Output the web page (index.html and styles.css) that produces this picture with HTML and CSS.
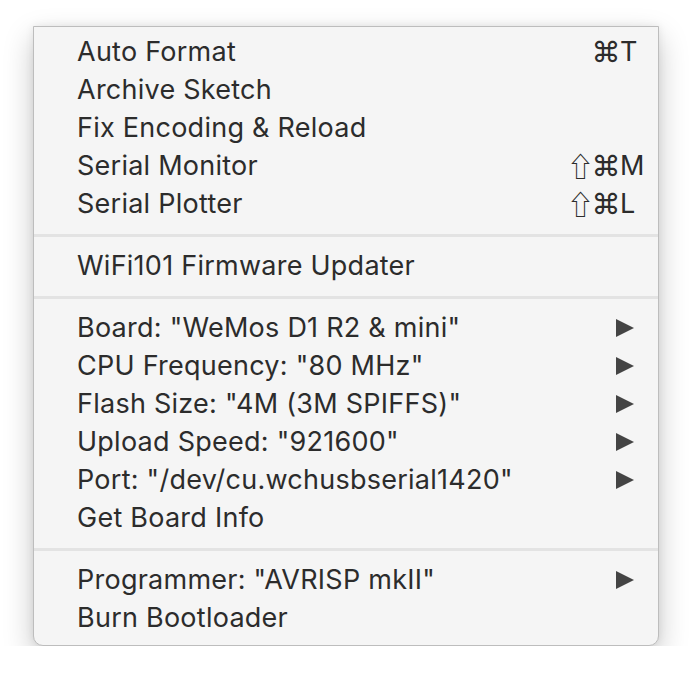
FILE: index.html
```html
<!DOCTYPE html>
<html>
<head>
<meta charset="utf-8">
<link rel="stylesheet" href="styles.css">
</head>
<body>
<div class="menu">
  <div class="item"><span class="label">Auto Format</span><span class="keys"><span class="mods"><span class="mod cmd">⌘</span></span><span class="key">T</span></span></div>
  <div class="item"><span class="label">Archive Sketch</span></div>
  <div class="item"><span class="label">Fix Encoding &amp; Reload</span></div>
  <div class="item"><span class="label">Serial Monitor</span><span class="keys"><span class="mods"><span class="mod shift">⇧</span><span class="mod cmd">⌘</span></span><span class="key">M</span></span></div>
  <div class="item"><span class="label">Serial Plotter</span><span class="keys"><span class="mods"><span class="mod shift">⇧</span><span class="mod cmd">⌘</span></span><span class="key">L</span></span></div>
  <div class="sep"></div>
  <div class="item"><span class="label">WiFi101 Firmware Updater</span></div>
  <div class="sep"></div>
  <div class="item"><span class="label">Board: "WeMos D1 R2 &amp; mini"</span><span class="arrow"></span></div>
  <div class="item"><span class="label">CPU Frequency: "80 MHz"</span><span class="arrow"></span></div>
  <div class="item"><span class="label">Flash Size: "4M (3M SPIFFS)"</span><span class="arrow"></span></div>
  <div class="item"><span class="label">Upload Speed: "921600"</span><span class="arrow"></span></div>
  <div class="item"><span class="label">Port: "/dev/cu.wchusbserial1420"</span><span class="arrow"></span></div>
  <div class="item"><span class="label">Get Board Info</span></div>
  <div class="sep"></div>
  <div class="item"><span class="label">Programmer: "AVRISP mkII"</span><span class="arrow"></span></div>
  <div class="item"><span class="label">Burn Bootloader</span></div>
</div>
</body>
</html>
```
FILE: styles.css
```css
html, body {
  margin: 0;
  padding: 0;
  background: #ffffff;
}
body {
  padding: 26px 0 0 33px;
  font-family: Inter, "Helvetica Neue", "Liberation Sans", sans-serif;
}
.menu {
  width: 624px;
  box-sizing: content-box;
  background: #f5f5f5;
  border: 1px solid #bdbdbd;
  border-radius: 0 0 10px 10px;
  padding: 6px 0 8px;
  box-shadow: 0 12px 30px rgba(0, 0, 0, 0.22), 0 0 8px rgba(0, 0, 0, 0.08);
  color: #2c2c2c;
}
.item {
  display: flex;
  align-items: center;
  height: 38px;
  padding-left: 43px;
  font-size: 27px;
  line-height: 38px;
  letter-spacing: 0.25px;
}
.label {
  flex: 1;
  white-space: nowrap;
}
.keys {
  display: flex;
  align-items: center;
  margin-right: 14px;
}
.mods {
  display: flex;
  justify-content: flex-end;
  gap: 1px;
  width: 50px;
  margin-right: 3px;
}
.mod {
  display: flex;
  justify-content: center;
  letter-spacing: 0;
}
.shift {
  width: 27px;
  font-family: "Noto Sans CJK JP", sans-serif;
  font-size: 27px;
}
.cmd {
  width: 22px;
  font-family: Inter, sans-serif;
  font-size: 29px;
}
.key {
  width: 24px;
  text-align: left;
  letter-spacing: 0;
}
.arrow {
  width: 0;
  height: 0;
  border-top: 9.5px solid transparent;
  border-bottom: 9.5px solid transparent;
  border-left: 18px solid #444444;
  margin-right: 24px;
}
.sep {
  height: 24px;
  display: flex;
  align-items: center;
}
.sep::before {
  content: "";
  display: block;
  width: 100%;
  height: 3px;
  background: #e3e3e3;
}
```
